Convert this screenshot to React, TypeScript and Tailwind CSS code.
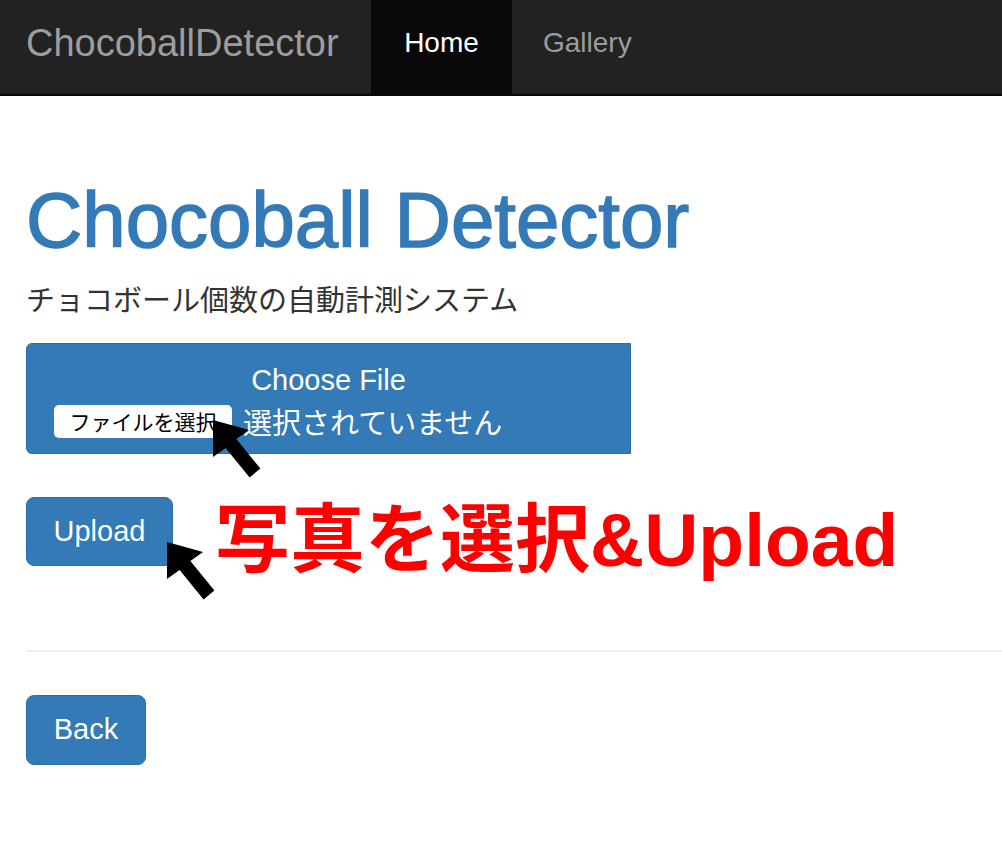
import React from "react";

// Black mouse-pointer style arrow, tip at the top-left corner of the box.
function Pointer({ className }: { className: string }) {
  return (
    <svg className={className} width="50" height="60" viewBox="0 0 50 60" aria-hidden="true">
      <polygon points="0,0 0,37 12.6,27.9 36.6,57.4 47.4,48.6 23.4,19.1 36,10" fill="#000" />
    </svg>
  );
}

export default function App() {
  return (
    <div className="relative min-h-[856px] overflow-hidden bg-white font-['Liberation_Sans',Arial,sans-serif]">
      <nav className="flex h-[96px] items-stretch border-b-2 border-[#080808] bg-[#222222]">
        <a className="flex w-[371px] items-center pb-2 pl-[26px] text-[38px] text-[#9d9d9d]">ChocoballDetector</a>
        <a className="flex w-[141px] items-center justify-center bg-[#080808] pb-2 text-[28px] text-white">Home</a>
        <a className="flex items-center px-[31px] pb-2 text-[28px] text-[#9d9d9d]">Gallery</a>
      </nav>

      <main className="px-[26px]">
        <h1 className="mt-[81px] text-[78px] leading-[86px] text-[#337ab7] [-webkit-text-stroke:1.5px_#337ab7]">
          Chocoball Detector
        </h1>
        <p className="mt-[15px] font-['Noto_Sans_CJK_JP',sans-serif] text-[29px] leading-[41px] text-[#333333]">
          チョコボール個数の自動計測システム
        </p>

        <div className="mt-[24px] w-[605px] rounded-l-[6px] border border-[#2e6da4] bg-[#337ab7] pt-[16px] pb-[11px] text-white">
          <div className="text-center text-[29px] leading-[41px]">Choose File</div>
          <div className="flex h-[41px] items-center pl-[27px]">
            <span className="flex h-[33px] w-[178px] items-center justify-center rounded-[5px] bg-white font-['Noto_Sans_CJK_JP',sans-serif] text-[21px] text-black">
              ファイルを選択
            </span>
            <span className="ml-[11px] font-['Noto_Sans_CJK_JP',sans-serif] text-[29px]">選択されていません</span>
          </div>
        </div>

        <div className="mt-[43px] flex h-[69px] items-start">
          <button className="h-[69px] w-[147px] shrink-0 rounded-[8px] border border-[#2e6da4] bg-[#337ab7] text-[29px] text-white">
            Upload
          </button>
          <span className="ml-[42px] mt-[6px] whitespace-nowrap font-['Liberation_Sans','Noto_Sans_CJK_JP',sans-serif] text-[75px] font-bold leading-none text-[#ff0000]">
            写真を選択&amp;Upload
          </span>
        </div>

        <hr className="-mr-[26px] mt-[84px] border-0 border-t-2 border-[#eeeeee]" />

        <button className="mt-[43px] h-[70px] w-[120px] rounded-[8px] border border-[#2e6da4] bg-[#337ab7] text-[29px] text-white">
          Back
        </button>
      </main>

      <Pointer className="absolute left-[213px] top-[420px]" />
      <Pointer className="absolute left-[167px] top-[542px]" />
    </div>
  );
}
